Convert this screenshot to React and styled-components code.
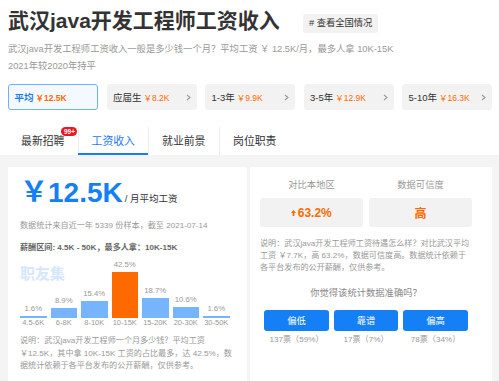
import { createGlobalStyle, styled } from 'styled-components';

const GlobalStyle = createGlobalStyle`
  body {
    margin: 0;
    background: #fff;
    font-family: "Liberation Sans", "Noto Sans CJK SC", sans-serif;
    color: #333;
  }
`;

const Page = styled.div`
  width: 499px;
  box-sizing: border-box;
  padding: 8px 7px 0 8px;
`;

const Header = styled.div`
  display: flex;
  align-items: flex-start;
`;

const Title = styled.h1`
  margin: 0;
  font-size: 21px;
  line-height: 26px;
  font-weight: 700;
  color: #333;
`;

const Tag = styled.span`
  margin: 6px 0 0 23px;
  height: 19px;
  padding: 0 6px;
  border-radius: 3px;
  background: #f2f2f2;
  font-size: 9.3px;
  line-height: 19px;
  color: #333;
`;

const Intro = styled.p`
  margin: 7px 0 0;
  font-size: 9.3px;
  line-height: 16.5px;
  color: #999;
`;

const Levels = styled.div`
  display: flex;
  gap: 8.5px;
  margin-top: 10px;
`;

const Level = styled.div`
  flex: 1;
  height: 26px;
  box-sizing: border-box;
  display: flex;
  align-items: center;
  padding: 0 5px 0 5.5px;
  border-radius: 3px;
  border: 1px solid ${({ $active }) => ($active ? '#6eb0ff' : '#f2f2f2')};
  background: ${({ $active }) => ($active ? '#f4f9ff' : '#f2f2f2')};
`;

const LevelName = styled.span`
  font-size: 9.5px;
  color: ${({ $active }) => ($active ? '#1a7cf5' : '#333')};
  font-weight: ${({ $active }) => ($active ? 700 : 400)};
`;

const LevelPay = styled.span`
  margin-left: 2px;
  font-size: 8.5px;
  color: #ff6a00;
  font-weight: ${({ $active }) => ($active ? 700 : 400)};
`;

const Chevron = styled.svg`
  margin-left: auto;
`;

const Tabs = styled.div`
  display: flex;
  height: 28px;
  margin-top: 17px;
`;

const Tab = styled.div`
  position: relative;
  width: 70.5px;
  box-sizing: border-box;
  display: flex;
  align-items: center;
  justify-content: center;
  border-right: 1px solid #ededed;
  font-size: 10.85px;
  color: ${({ $active }) => ($active ? '#1a7cf5' : '#333')};

  &:last-child {
    border-right: none;
  }

  ${({ $active }) =>
    $active &&
    `&::after {
      content: '';
      position: absolute;
      left: -1px;
      right: 0;
      bottom: 0;
      height: 2px;
      background: #1a7cf5;
    }`}
`;

const TabText = styled.span`
  position: relative;
  line-height: 12px;
`;

const Badge = styled.span`
  position: absolute;
  left: calc(100% - 3px);
  top: -8px;
  min-width: 16px;
  height: 9px;
  padding: 0 2px;
  box-sizing: border-box;
  border-radius: 5px;
  background: #f0141e;
  color: #fff;
  font-size: 6.5px;
  font-weight: 700;
  line-height: 9px;
  text-align: center;
`;

const Board = styled.div`
  display: grid;
  grid-template-columns: 239px 1fr;
  gap: 3px;
  margin: 0 -7px 0 -8px;
  padding: 12px 7px 4px 8px;
  background: #f4f4f4;
`;

const Card = styled.div`
  background: #fff;
  padding: ${({ $pad }) => $pad};
`;

const BigRow = styled.div`
  display: flex;
  align-items: baseline;
  line-height: 34px;
`;

const Amount = styled.span`
  font-size: 28px;
  font-weight: 700;
  color: #1580f5;
`;

const Unit = styled.span`
  margin-left: 2px;
  font-size: 9.5px;
  color: #333;
`;

const Note = styled.div`
  margin-top: ${({ $top }) => $top}px;
  font-size: 8.1px;
  line-height: 12px;
  color: ${({ $strong }) => ($strong ? '#666' : '#999')};
  font-weight: ${({ $strong }) => ($strong ? 700 : 400)};
`;

const Chart = styled.div`
  position: relative;
  width: 209.5px;
  margin-top: 4px;
`;

const Watermark = styled.div`
  position: absolute;
  left: 0;
  top: 7px;
  font-size: 15px;
  line-height: 17px;
  font-weight: 700;
  color: #d5e7fe;
`;

const Plot = styled.div`
  display: flex;
  align-items: flex-end;
  gap: 4px;
  height: 60px;
`;

const Column = styled.div`
  width: 26.5px;
  display: flex;
  flex-direction: column;
  align-items: center;
`;

const Value = styled.span`
  margin-bottom: 2px;
  font-size: 7.75px;
  line-height: 10px;
  color: #999;
`;

const Bar = styled.div`
  width: 100%;
  background: ${({ $top }) => ($top ? '#ff6a00' : '#76b4fd')};
`;

const Axis = styled.div`
  display: flex;
  gap: 4px;
`;

const AxisLabel = styled.span`
  width: 26.5px;
  text-align: center;
  white-space: nowrap;
  font-size: 7.5px;
  line-height: 10px;
  color: #999;
`;

const Desc = styled.p`
  margin: ${({ $top }) => $top}px 0 0;
  width: ${({ $width }) => $width}px;
  font-size: 8.1px;
  line-height: ${({ $lh }) => $lh}px;
  color: #999;
`;

const Stats = styled.div`
  display: grid;
  grid-template-columns: 103px 103px;
  gap: 6px;
`;

const StatLabel = styled.div`
  text-align: center;
  font-size: 9.3px;
  line-height: 12px;
  color: #999;
`;

const StatBox = styled.div`
  margin-top: 7px;
  height: 29px;
  border-radius: 3px;
  background: #f2f2f2;
  display: flex;
  align-items: center;
  justify-content: center;
  gap: 1.5px;
  font-size: 12px;
  font-weight: 700;
  color: #ff6a00;
`;

const Question = styled.div`
  margin-top: 13px;
  text-align: center;
  font-size: 9.3px;
  line-height: 12px;
  color: #888;
`;

const Votes = styled.div`
  display: flex;
  justify-content: center;
  gap: 5px;
  margin-top: 10.7px;
`;

const Vote = styled.div`
  width: 64.5px;
  display: flex;
  flex-direction: column;
  align-items: center;
`;

const VoteButton = styled.button`
  width: 100%;
  height: 21px;
  border: none;
  border-radius: 3px;
  background: #1580f5;
  color: #fff;
  font-family: inherit;
  font-size: 9.3px;
  cursor: pointer;
`;

const VoteCount = styled.span`
  margin-top: 4px;
  font-size: 8.1px;
  line-height: 10px;
  color: #999;
`;

const levels = [
  { name: '平均', pay: '￥12.5K', active: true },
  { name: '应届生', pay: '￥8.2K' },
  { name: '1-3年', pay: '￥9.9K' },
  { name: '3-5年', pay: '￥12.9K' },
  { name: '5-10年', pay: '￥16.3K' },
];

const tabs = ['最新招聘', '工资收入', '就业前景', '岗位职责'];

const bars = [
  { range: '4.5-6K', pct: 1.6 },
  { range: '6-8K', pct: 8.9 },
  { range: '8-10K', pct: 15.4 },
  { range: '10-15K', pct: 42.5, top: true },
  { range: '15-20K', pct: 18.7 },
  { range: '20-30K', pct: 10.6 },
  { range: '30-50K', pct: 1.6 },
];

const votes = [
  { label: '偏低', count: '137票（59%）' },
  { label: '靠谱', count: '17票（7%）' },
  { label: '偏高', count: '78票（34%）' },
];

const App = () => {
  return (
    <>
      <GlobalStyle />
      <Page>
        <Header>
          <Title>武汉java开发工程师工资收入</Title>
          <Tag># 查看全国情况</Tag>
        </Header>
        <Intro>
          武汉java开发工程师工资收入一般是多少钱一个月？平均工资 ￥ 12.5K/月，最多人拿 10K-15K
          <br />
          2021年较2020年持平
        </Intro>

        <Levels>
          {levels.map((l) => (
            <Level key={l.name} $active={l.active}>
              <LevelName $active={l.active}>{l.name}</LevelName>
              <LevelPay $active={l.active}>{l.pay}</LevelPay>
              {!l.active && (
                <Chevron width="5" height="7" viewBox="0 0 5 7">
                  <polyline points="1,1 4,3.5 1,6" fill="none" stroke="#999" strokeWidth="1.1" />
                </Chevron>
              )}
            </Level>
          ))}
        </Levels>

        <Tabs>
          {tabs.map((t, i) => (
            <Tab key={t} $active={i === 1}>
              <TabText>
                {t}
                {i === 0 && <Badge>99+</Badge>}
              </TabText>
            </Tab>
          ))}
        </Tabs>

        <Board>
          <Card $pad="9px 0 10.5px 12px">
            <BigRow>
              <Amount>￥12.5K</Amount>
              <Unit>/ 月平均工资</Unit>
            </BigRow>
            <Note $top={4}>数据统计来自近一年 5339 份样本，截至 2021-07-14</Note>
            <Note $top={10} $strong>
              薪酬区间: 4.5K - 50K，最多人拿：10K-15K
            </Note>
            <Chart>
              <Watermark>职友集</Watermark>
              <Plot>
                {bars.map((b) => (
                  <Column key={b.range}>
                    <Value>{b.pct}%</Value>
                    <Bar $top={b.top} style={{ height: `${b.pct * 1.08}px` }} />
                  </Column>
                ))}
              </Plot>
              <Axis>
                {bars.map((b) => (
                  <AxisLabel key={b.range}>{b.range}</AxisLabel>
                ))}
              </Axis>
            </Chart>
            <Desc $top={7} $width={212} $lh={12.5}>
              说明：武汉java开发工程师一个月多少钱？平均工资￥12.5K，其中拿 10K-15K 工资的占比最多，达 42.5%，数据统计依赖于各平台发布的公开薪酬，仅供参考。
            </Desc>
          </Card>

          <Card $pad="12px 20px 0 10px">
            <Stats>
              <div>
                <StatLabel>对比本地区</StatLabel>
                <StatBox>
                  <svg width="5" height="6" viewBox="0 0 5 6">
                    <path d="M2.5 0 L5 3 H3.4 V6 H1.6 V3 H0 Z" fill="#ff6a00" />
                  </svg>
                  63.2%
                </StatBox>
              </div>
              <div>
                <StatLabel>数据可信度</StatLabel>
                <StatBox>高</StatBox>
              </div>
            </Stats>
            <Desc $top={11.3} $width={212} $lh={12}>
              说明：武汉java开发工程师工资待遇怎么样？对比武汉平均工资 ￥7.7K，高 63.2%，数据可信度高。数据统计依赖于各平台发布的公开薪酬，仅供参考。
            </Desc>
            <Question>你觉得该统计数据准确吗？</Question>
            <Votes>
              {votes.map((v) => (
                <Vote key={v.label}>
                  <VoteButton>{v.label}</VoteButton>
                  <VoteCount>{v.count}</VoteCount>
                </Vote>
              ))}
            </Votes>
          </Card>
        </Board>
      </Page>
    </>
  );
};

export default App;
